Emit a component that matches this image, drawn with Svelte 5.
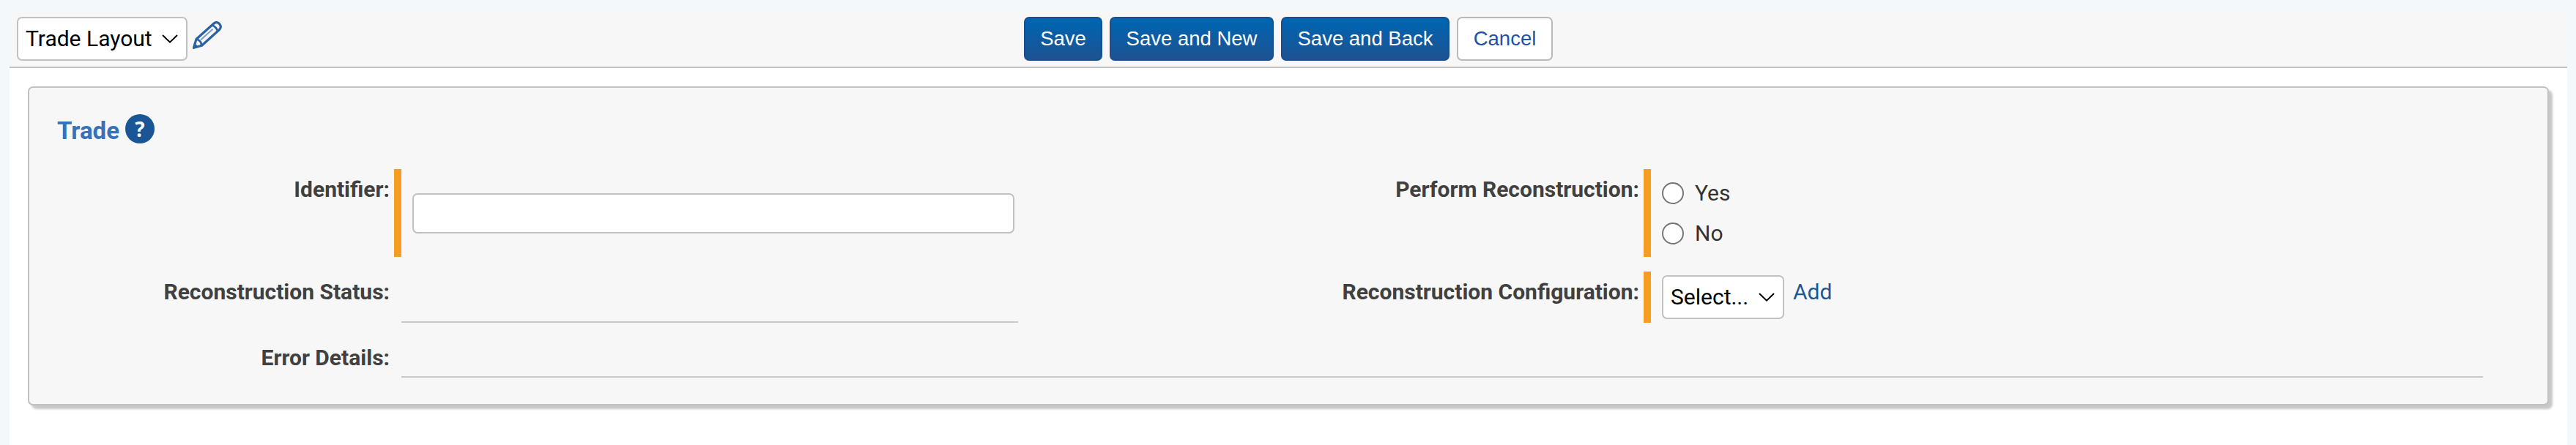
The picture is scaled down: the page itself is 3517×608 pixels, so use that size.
<script>
  const actions = ['Save', 'Save and New', 'Save and Back'];
  const options = ['Yes', 'No'];
</script>

{#snippet chevron()}
  <svg class="chevron" viewBox="0 0 22 12" width="22" height="12" aria-hidden="true">
    <path d="M1 1L11 10.6L21 1" fill="none" stroke="currentColor" stroke-width="2" />
  </svg>
{/snippet}

<div class="page">
  <header>
    <div class="layout">
      <div class="select layout-select"><span>Trade Layout</span>{@render chevron()}</div>
      <svg class="pencil" viewBox="0 0 40 38" width="40" height="38" aria-hidden="true">
        <g fill="none" stroke="#2a62a2" stroke-width="3.2" stroke-linejoin="round">
          <path d="M1.5 36.3L5 24.5L29 3Q33 0 36.5 3.5Q40 7.5 36.8 11.3L12.5 33.2Z" />
          <path d="M5 24.5Q11.5 26 12.5 33.2M26.5 5.5Q32.5 7.5 34 13.8" stroke-width="2.8" />
          <path d="M11 25.5L27.5 10.8" stroke-width="2" opacity=".6" />
        </g>
        <path d="M0 38L1.8 30.5Q6 31.5 7.5 35.8Z" fill="#2a62a2" />
      </svg>
    </div>
    <div class="actions">
      {#each actions as action}
        <button class="primary">{action}</button>
      {/each}
      <button>Cancel</button>
    </div>
  </header>

  <section>
    <h2>
      <span class="title">Trade</span>
      <span class="help">?</span>
    </h2>
    <div class="form">
      <div class="label">Identifier:</div>
      <div class="field required"><input type="text" aria-label="Identifier" /></div>
      <div class="label">Perform Reconstruction:</div>
      <div class="field required radios">
        {#each options as option}
          <label><input type="radio" name="perform" /><span>{option}</span></label>
        {/each}
      </div>

      <div class="label">Reconstruction Status:</div>
      <div class="field readonly"></div>
      <div class="label">Reconstruction Configuration:</div>
      <div class="field required config">
        <div class="select config-select"><span>Select...</span>{@render chevron()}</div>
        <a href="#add">Add</a>
      </div>

      <div class="label">Error Details:</div>
      <div class="field readonly wide"></div>
    </div>
  </section>
</div>

<style>
  :global(body) {
    background: #f3f8fb;
  }
  * {
    box-sizing: border-box;
  }
  .page {
    margin: 0 12px 0 13px;
    height: 608px;
    border-top: 16px solid #f3f8fb;
    background: #fff;
    color: #333;
    font: 30px/36px Roboto, sans-serif;
  }
  header {
    display: grid;
    grid-template-columns: 1fr auto 1fr;
    height: 77px;
    padding: 7px 10px 0;
    background: #f7f7f7;
    border-bottom: 2px solid #c1c1c1;
  }
  .layout {
    display: flex;
    align-items: flex-start;
    gap: 7px;
  }
  .pencil {
    margin-top: 6px;
  }
  .select {
    display: flex;
    align-items: center;
    justify-content: space-between;
    height: 60px;
    border: 2px solid #c1c1c1;
    border-radius: 7px;
    background: #fff;
    color: #000;
    white-space: nowrap;
  }
  .layout-select {
    width: 233px;
    padding: 0 11px 0 10px;
  }
  .config-select {
    width: 167px;
    padding: 0 11px 0 10px;
  }
  .actions {
    display: flex;
    gap: 10px;
  }
  button {
    height: 60px;
    padding: 0 0 1px;
    width: 131px;
    border: 2px solid #b9b9b9;
    border-radius: 7px;
    background: #fff;
    color: #2450a4;
    font: 27.5px/34px "Liberation Sans", Arial, sans-serif;
    white-space: nowrap;
  }
  .primary {
    border-color: #1b4f8c;
    background: linear-gradient(#0064b1 10%, #1b5495 85%) border-box;
    color: #fff;
  }
  .primary:nth-child(1) {
    width: 107px;
  }
  .primary:nth-child(2) {
    width: 224px;
  }
  .primary:nth-child(3) {
    width: 230px;
  }
  section {
    width: 3442px;
    height: 436px;
    margin: 25px 0 0 25px;
    padding: 36px 0 0;
    border: 2px solid #c1c1c1;
    border-radius: 7px;
    background: #f7f7f7;
    box-shadow: 5px 5px 3px #c8c8c8;
  }
  h2 {
    display: flex;
    height: 40px;
    margin: 0 0 35px 38px;
    color: #3572b8;
    font-size: 33px;
    font-weight: 700;
    line-height: 46px;
  }
  .title {
    width: 93px;
  }
  .help {
    width: 40px;
    height: 40px;
    border-radius: 50%;
    background: #1a5696;
    color: #fff;
    font: bold 28px/40px "Open Sans", sans-serif;
    text-align: center;
  }
  .form {
    display: grid;
    grid-template-columns: 498px 852px 854px 1146px;
    grid-template-rows: 120px 70px 55px;
    row-gap: 20px;
  }
  .label {
    padding: 10px 6px 0 0;
    color: #404040;
    font-weight: 700;
    text-align: right;
  }
  .field {
    padding-left: 15px;
  }
  .required {
    border-left: 10px solid #f59d20;
  }
  .readonly {
    margin-left: 10px;
    border-bottom: 2px solid #c9c9c9;
  }
  .wide {
    grid-column: 2 / -1;
  }
  input[type='text'] {
    display: block;
    width: 822px;
    height: 55px;
    margin-top: 33px;
    border: 2px solid #c1c1c1;
    border-radius: 7px;
    background: #fff;
  }
  .radios {
    display: flex;
    flex-direction: column;
    gap: 19px;
    padding-top: 15px;
  }
  .radios label {
    display: flex;
    gap: 15px;
    height: 36px;
  }
  input[type='radio'] {
    appearance: none;
    width: 30px;
    height: 30px;
    margin: 3px 0 0;
    border: 2px solid #767676;
    border-radius: 50%;
    background: #fff;
  }
  .config {
    display: flex;
    align-items: flex-start;
    gap: 12px;
    padding-top: 5px;
  }
  a {
    margin-top: 5px;
    color: #1d5799;
    text-decoration: none;
  }
</style>
